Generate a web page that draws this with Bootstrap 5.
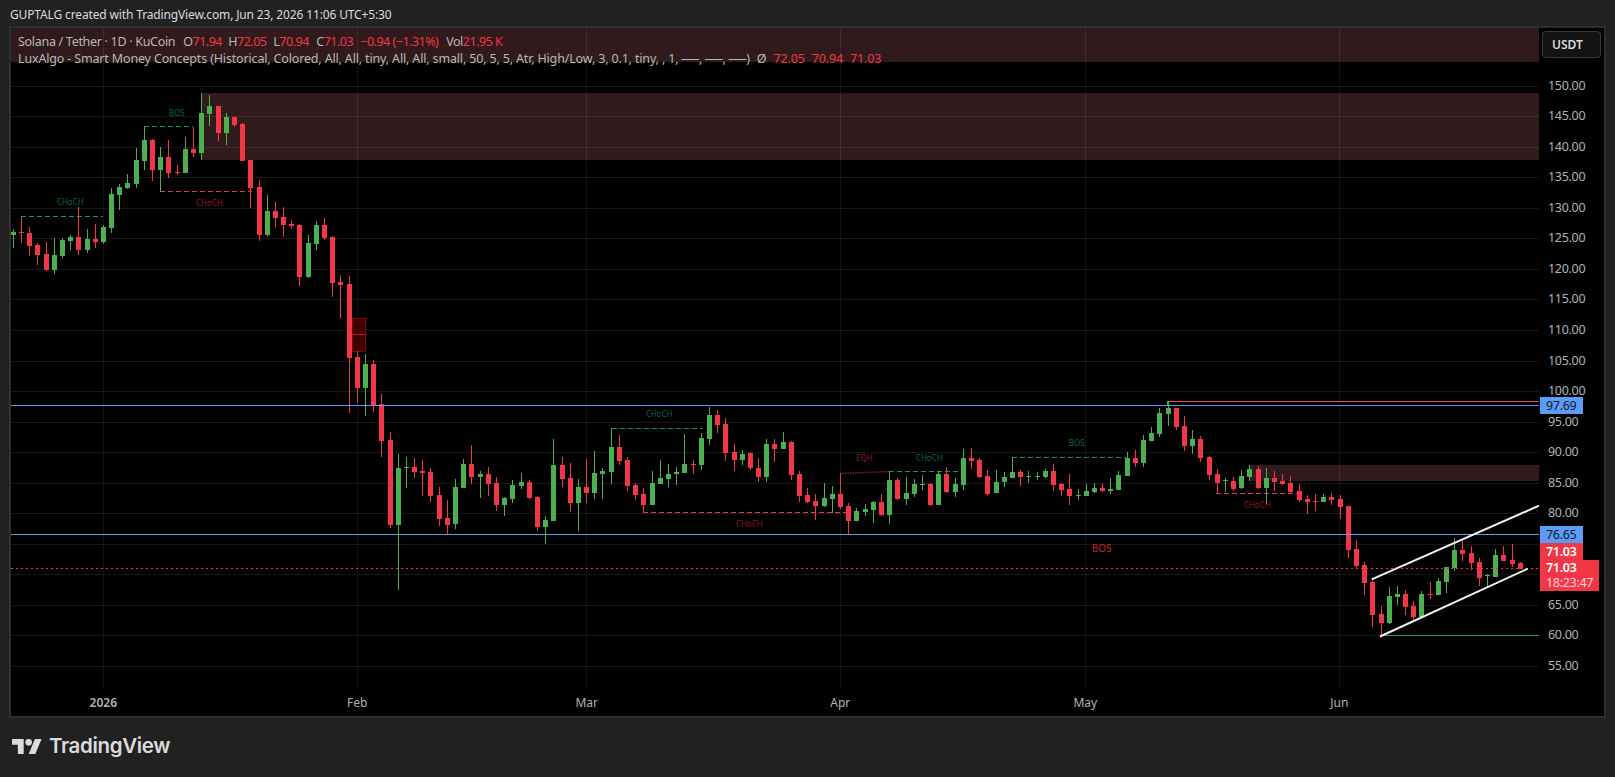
<!DOCTYPE html>
<html lang="en">
<head>
  <meta charset="UTF-8">
  <title>SOLUSDT snapshot</title>
  <link href="https://cdn.jsdelivr.net/npm/bootstrap@5.3.3/dist/css/bootstrap.min.css" rel="stylesheet">
  <style>
    html, body { height: 100%; }
    body { background: #212121; color: #d6d6d6; font-family: "Noto Sans", "Liberation Sans", sans-serif; overflow: hidden; }
    .snap-head { height: 26px; padding-left: 10px; font-size: 12px; letter-spacing: -.14px; line-height: 29px; color: #dbdbdb; }
    .snap-frame { width: 1597px; height: 692px; margin-left: 9px; border: 2px solid #2f2f2f; background: #000; }
    .plot-col { width: 1528px; }
    .plot { display: block; width: 1528px; height: 660px; }
    .time-axis { height: 28px; font-size: 12px; color: #b2b2b2; }
    .time-axis span { top: 6px; }
    .price-col { flex: 1; font-size: 12.5px; letter-spacing: -.3px; color: #b2b2b2; }
    .price-col .tick { left: 9px; line-height: 16px; }
    .legend-box { left: 7px; top: 5px; font-size: 12.5px; letter-spacing: -.16px; line-height: 17px; color: #b8b8b8; }
    .legend-box b { font-weight: 400; color: #f23645; }
    .legend-vals { display: flex; }
    .legend-vals span, .legend-vals > b { letter-spacing: -.5px; white-space: pre; }
    .legend-vals .legend-title { letter-spacing: -.3px; }
    .legend-o { margin-left: 8px; width: 45px; }
    .legend-h { width: 45px; }
    .legend-l { width: 43px; }
    .legend-c { width: 44px; }
    .legend-chg { width: 86px; }
    .snap-frame .usdt-btn { left: 3px; top: 3px; width: 59px; height: 27px; padding: 0 0 0 9px; text-align: left; font-size: 12px; font-weight: 600; line-height: 24px; color: #dbdbdb; background: #131313; border: 1px solid #3a3a3a; border-radius: 4px; }
    .tag { left: 1px; width: 43px; height: 17px; line-height: 17px; padding-left: 6px; font-size: 12.5px; }
    .tag-blue { background: #5b9cf6; color: #131722; }
    .tag-red { background: #f23645; color: #fff; font-weight: 600; }
    .tag-wide { width: 59px; height: 31px; line-height: 15px; }
    .tag-wide small { display: block; font-size: 12.5px; font-weight: 400; color: #fcd5d8; }
    .snap-foot { height: 57px; padding-left: 12px; color: #dbdbdb; }
    .tv-word { margin-left: 7px; font-family: Inter, "Noto Sans", sans-serif; font-weight: 600; font-size: 20.5px; letter-spacing: -.35px; }
  </style>
</head>
<body>
  <div class="snap-head text-nowrap">GUPTALG created with TradingView.com, Jun 23, 2026 11:06 UTC+5:30</div>

  <div class="snap-frame d-flex position-relative">
    <div class="plot-col position-relative">
      <svg class="plot" id="plot" viewBox="11 28 1528 660" xmlns="http://www.w3.org/2000/svg"></svg>
      <div class="time-axis position-relative" id="timeAxis"></div>
      <div class="legend-box position-absolute text-nowrap">
        <div class="legend-vals">
          <span class="legend-title">Solana / Tether · 1D · KuCoin</span>
          <span class="legend-o">O<b>71.94</b></span>
          <span class="legend-h">H<b>72.05</b></span>
          <span class="legend-l">L<b>70.94</b></span>
          <span class="legend-c">C<b>71.03</b></span>
          <b class="legend-chg">−0.94 (−1.31%)</b>
          <span>Vol<b>21.95 K</b></span>
        </div>
        <div>LuxAlgo - Smart Money Concepts (Historical, Colored, All, All, tiny, All, All, small, 50, 5, 5, Atr, High/Low, 3, 0.1, tiny, , 1, ──, ──, ──)
          <span class="ms-1">Ø</span>
          <b class="ms-1">72.05</b> <b class="ms-1">70.94</b> <b class="ms-1">71.03</b>
        </div>
      </div>
    </div>
    <div class="price-col position-relative" id="priceCol">
      <button class="usdt-btn btn position-absolute" type="button">USDT</button>
    </div>
  </div>

  <div class="snap-foot d-flex align-items-center">
    <svg width="30" height="15" viewBox="0 4 36 18" xmlns="http://www.w3.org/2000/svg" fill="#dbdbdb">
      <path d="M14 22H7V11H0V4h14v18zM28 22h-8l7.5-18h8L28 22z"/><circle cx="20" cy="8" r="4"/>
    </svg>
    <span class="tv-word">TradingView</span>
  </div>

  <script>
    // candles read off the chart: colour, body top, body bottom, wick top, wick bottom (3x px)
    const rows = [
      [0, `g 696 705 687 743,r 695 698 648 728,r 700 737 682 768,r 735 765 728 795,r 762 810 725 814,g 765 810 715 822,g 720 768 715 775,g 711 722 705 750,r 711 750 622 765,g 717 750 687 758,
r 717 725 672 744,g 682 725 675 732,g 582 684 565 698,g 561 585 552 630,g 548 564 522 567,g 480 552 444 564,g 420 483 380 510,r 420 510 417 543,g 471 510 441 575,r 471 519 420 534,
r 516 520 495 525,g 447 519 411 519,r 447 459 380 471,g 339 459 279 480,g 318 342 285 378,r 318 399 318 423,g 351 399 339 435,r 351 375 351 381,r 372 483 369 483,r 480 564 480 624,
r 561 705 540 723,g 633 705 585 711,r 633 654 606 684,r 651 675 621 711,r 672 678 660 687,r 675 831 672 858,g 729 831 705 834,g 675 732 663 750,r 675 714 654 720,r 711 849 708 891,
r 846 855 825 954,r 852 1074 828 1239,r 1071 1164 1053 1209,g 1092 1164 1062 1248,r 1092 1215 1080 1236,r 1212 1323 1182 1371,r 1320 1575 1296 1584,g 1404 1575 1362 1770,g 1401 1404 1371 1464,r 1401 1416 1374 1434,
r 1413 1419 1380 1488,r 1416 1488 1404 1506,r 1485 1557 1461 1578,r 1554 1575 1500 1602,g 1461 1572 1437 1587,g 1392 1464 1377 1464,r 1392 1431 1335 1452,g 1422 1431 1413 1494,r 1422 1452 1401 1488,r 1449 1515 1431 1533`],
      [380, `g 354 375 351 408,g 315 357 300 369,g 306 318 279 327,r 306 354 300 357,r 351 441 348 453,g 420 441 408 492,g 255 423 177 423,r 255 297 231 321,r 294 369 249 396,g 321 369 297 453,
r 321 339 237 369,g 279 339 213 357,g 273 282 264 357,g 201 276 145 312,r 201 243 165 255,r 240 318 231 333,r 315 345 309 360,r 342 375 324 398,g 309 375 273 375,g 294 312 240 312,
g 282 297 252 321,g 276 282 261 315,g 252 279 162 279,r 252 255 240 282,g 174 255 159 270,g 105 177 81 195,r 105 135 90 159,r 132 219 114 243,r 216 240 192 273,g 222 240 210 255,
r 219 264 219 270,r 264 291 234 306,g 192 291 177 306,r 192 207 177 246,g 186 207 156 207,r 186 285 183 300,r 282 348 273 366,r 345 366 324 369,r 363 378 342 420,g 354 378 309 381,
g 342 357 318 399,r 342 381 279 387,r 378 423 369 462,g 393 423 384 423,g 387 396 372 408,g 366 390 363 429,r 366 405 342 408,g 300 405 273 432,r 300 357 294 360,g 339 357 291 375,
g 312 342 297 351,g 312 315 285 330,r 312 375 309 378,g 282 375 273 375,r 282 336 261 339,g 312 336 294 351,g 234 315 207 330,r 234 243 204 267,r 240 291 234 294,r 288 342 270 348,
g 306 339 270 339,g 291 306 276 321,g 276 294 232 294,r 276 291 270 318,g 288 291 273 309,g 288 291 276 300,g 273 291 267 294,r 273 315 252 333,r 312 330 309 348,r 327 348 282 375,
g 345 348 327 360,g 333 348 312 348,g 324 336 309 339,r 324 333 309 336,g 327 333 294 342,g 285 330 273 330,g 234 288 216 288,r 234 249 210 261,g 180 249 165 261,g 159 183 141 183,
g 99 162 84 171,g 84 102 64 138,r 84 141 84 150,r 138 198 108 213,g 177 198 150 222,r 177 234 168 246,r 231 285 228 300,r 282 309 267 340,g 300 303 294 336,r 303 327 291 333,
g 288 324 270 327,g 267 291 255 303,r 267 324 258 327,g 294 324 264 372,r 294 306 273 333,r 303 312 282 315,r 309 336 288 339,r 333 360 312 366,r 357 366 345 402,r 363 366 342 393,g 351 366 342 366`],
      [480, `r 50 60 40 75,r 57 81 45 117,r 78 210 78 234,r 207 258 180 267,r 255 309 246 345,r 306 405 300 441,r 402 429 378 468,g 348 429 321 432,g 342 351 318 375,r 342 381 330 405,
r 378 411 363 420,g 342 411 333 411,r 342 345 306 357,g 303 345 294 345,g 261 306 261 339,g 210 264 174 273,r 210 222 180 243,r 219 249 198 270,r 246 294 234 318,g 285 288 282 321,
g 225 291 207 291,r 225 243 198 243,r 240 252 192 261,r 249 267 246 267`]
    ];

    const GREEN = '#4caf50', RED = '#f23645', TEAL = '#089981';
    const priceY = p => 85.7 + (150 - p) * 6.107;
    const barX = i => 13.3 + 8.19 * i;
    const months = [['2026', 103.3, 1], ['Feb', 357.3], ['Mar', 586.7], ['Apr', 840.3], ['May', 1085.3], ['Jun', 1339.3]];

    let s = '';
    const rect = (x, y, w, h, fill, extra = '') => `<rect x="${x}" y="${y}" width="${w}" height="${h}" fill="${fill}" ${extra}/>`;
    const hline = (x1, x2, y, col, dash = '', w = 1) => `<line x1="${x1}" x2="${x2}" y1="${y}" y2="${y}" stroke="${col}" stroke-width="${w}" stroke-dasharray="${dash}" shape-rendering="crispEdges"/>`;
    const label = (x, y, t, col, size = 8) => `<text x="${x}" y="${y}" fill="${col}" font-size="${size}" text-anchor="middle" dominant-baseline="middle" font-family="Noto Sans, sans-serif">${t}</text>`;

    // order blocks go under the grid so the grid shows through them
    s += rect(11, 28, 1528, 34, '#311a1b');
    s += rect(201, 93, 1338, 67, '#311a1b');
    s += rect(1250, 465, 289, 16, '#311a1b');

    for (let p = 150; p >= 55; p -= 5) {
      const y = Math.round(priceY(p)) + .5;
      s += hline(11, 1539, y, 'rgba(255,255,255,.09)');
    }
    months.forEach(m => {
      const x = Math.floor(m[1]) + .5;
      s += `<line x1="${x}" x2="${x}" y1="28" y2="688" stroke="rgba(255,255,255,.07)" shape-rendering="crispEdges"/>`;
    });

    // fair value gap
    s += rect(352.5, 318.5, 13, 16, '#400003', 'stroke="#7a0a10"');
    s += rect(352.5, 334.5, 13, 17, '#400003', 'stroke="#7a0a10"');
    s += hline(352, 366, 334.5, '#c4101c');

    // structure lines under the candles
    const dash = '5 3';
    s += hline(21, 103, 216.5, TEAL, dash);
    s += hline(144, 193, 126.5, TEAL, dash);
    s += hline(160, 252, 191.5, RED, dash);
    s += hline(612, 703, 428.5, TEAL, dash);
    s += hline(643, 847, 512.5, RED, dash);
    s += hline(889, 963, 471.5, TEAL, dash);
    s += hline(1012, 1126, 457.5, TEAL, dash);
    s += hline(1216, 1298, 493.5, RED, dash);
    s += `<line x1="840" y1="473.5" x2="889" y2="471.5" stroke="#8a1a28" stroke-width="1.5" stroke-dasharray="1.5 1"/>`;
    s += hline(1167, 1539, 401.5, '#e8505c');
    s += `<line x1="1167.5" x2="1167.5" y1="401" y2="405" stroke="${GREEN}" shape-rendering="crispEdges"/>`;
    s += hline(1380, 1539, 635.5, '#2a8f78');

    let n = 0;
    rows.forEach(([y0, txt]) => {
      txt.split(',').forEach(row => {
        const [c, bt, bb, wt, wb] = row.trim().split(' ');
        const col = c === 'g' ? GREEN : RED;
        const x = Math.floor(barX(n));
        const y = v => Math.round(y0 + v / 3);
        s += `<g shape-rendering="crispEdges">` + rect(x, y(wt), 1, y(wb) - y(wt), col) + rect(x - 2, y(bt), 5, Math.max(1, y(bb) - y(bt)), col) + `</g>`;
        n++;
      });
    });

    // price lines
    s += hline(11, 1539, 405.5, '#5b9cf6');
    s += hline(11, 1539, 534.5, '#5b9cf6');
    s += hline(11, 1539, 568.5, RED, '2 3');

    // hand drawn channel
    s += `<line x1="1371.7" y1="579.3" x2="1539" y2="505.7" stroke="#f2f2f2" stroke-width="2"/>`;
    s += `<line x1="1380" y1="636.5" x2="1527.7" y2="568.7" stroke="#f2f2f2" stroke-width="2"/>`;

    const dimTeal = '#0b6557', dimRed = '#8e1c28';
    s += label(70.3, 203.3, 'CHoCH', dimTeal);
    s += label(176.7, 113.7, 'BOS', dimTeal);
    s += label(209.3, 203.7, 'CHoCH', dimRed);
    s += label(659.3, 415.3, 'CHoCH', dimTeal);
    s += label(749.3, 524.7, 'CHoCH', dimRed);
    s += label(864.3, 458.7, 'EQH', dimRed);
    s += label(929.3, 458.7, 'CHoCH', dimTeal);
    s += label(1076.7, 444.3, 'BOS', dimTeal);
    s += label(1257.3, 505.7, 'CHoCH', dimRed);
    s += label(1101.7, 549.7, 'BOS', '#c4202f', 10);
    document.getElementById('plot').innerHTML = s;

    // axes
    const timeAxis = document.getElementById('timeAxis');
    months.forEach(m => {
      const el = document.createElement('span');
      el.className = 'position-absolute translate-middle-x' + (m[2] ? ' fw-semibold' : '');
      el.style.left = (m[1] - 11) + 'px';
      el.textContent = m[0];
      timeAxis.appendChild(el);
    });

    const priceCol = document.getElementById('priceCol');
    for (let p = 150; p >= 55; p -= 5) {
      if (p === 75 || p === 70) continue;
      const el = document.createElement('div');
      el.className = 'tick position-absolute translate-middle-y';
      el.style.top = (priceY(p) - 28) + 'px';
      el.textContent = p.toFixed(2);
      priceCol.appendChild(el);
    }
    const tags = [
      [397, 'tag-blue', '97.69'],
      [526, 'tag-blue', '76.65'],
      [543, 'tag-red', '71.03'],
      [560, 'tag-red tag-wide', '71.03<small>18:23:47</small>']
    ];
    tags.forEach(t => {
      const el = document.createElement('div');
      el.className = 'tag position-absolute ' + t[1];
      el.style.top = (t[0] - 28) + 'px';
      el.innerHTML = t[2];
      priceCol.appendChild(el);
    });
  </script>
  <script src="https://cdn.jsdelivr.net/npm/bootstrap@5.3.3/dist/js/bootstrap.bundle.min.js"></script>
</body>
</html>
